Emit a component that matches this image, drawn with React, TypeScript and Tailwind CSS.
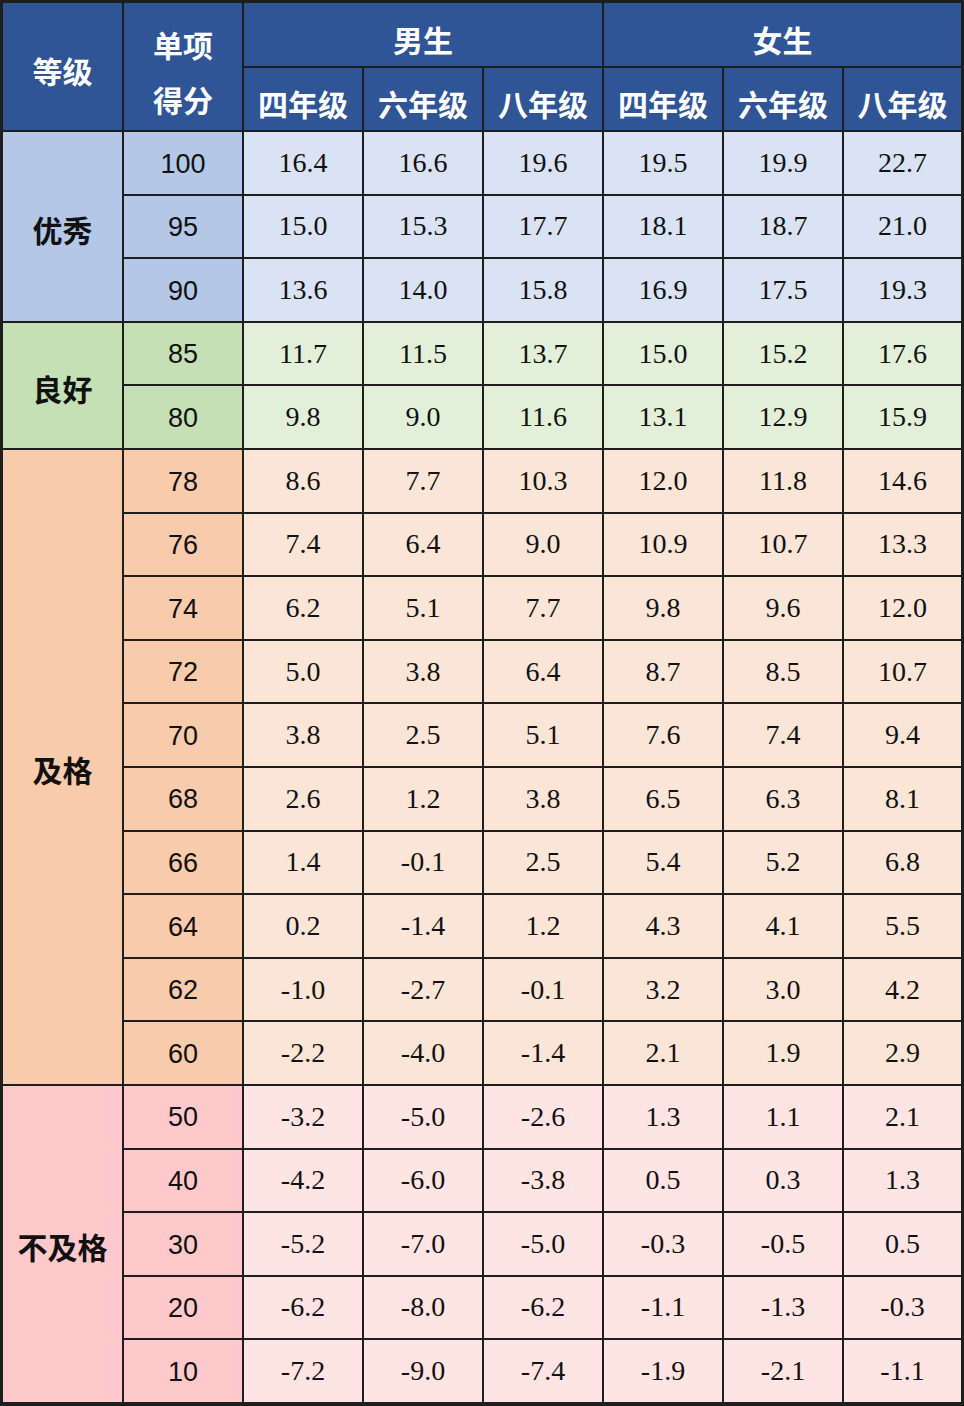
const grades = ["四年级", "六年级", "八年级", "四年级", "六年级", "八年级"];

const groups = [
  {
    label: "优秀",
    span: "row-span-3",
    side: "bg-[#b4c7e7]",
    cell: "bg-[#dae3f3]",
    rows: [
      ["100", "16.4", "16.6", "19.6", "19.5", "19.9", "22.7"],
      ["95", "15.0", "15.3", "17.7", "18.1", "18.7", "21.0"],
      ["90", "13.6", "14.0", "15.8", "16.9", "17.5", "19.3"],
    ],
  },
  {
    label: "良好",
    span: "row-span-2",
    side: "bg-[#c5e0b4]",
    cell: "bg-[#e2f0d9]",
    rows: [
      ["85", "11.7", "11.5", "13.7", "15.0", "15.2", "17.6"],
      ["80", "9.8", "9.0", "11.6", "13.1", "12.9", "15.9"],
    ],
  },
  {
    label: "及格",
    span: "row-span-10",
    side: "bg-[#f8cbad]",
    cell: "bg-[#fbe5d6]",
    rows: [
      ["78", "8.6", "7.7", "10.3", "12.0", "11.8", "14.6"],
      ["76", "7.4", "6.4", "9.0", "10.9", "10.7", "13.3"],
      ["74", "6.2", "5.1", "7.7", "9.8", "9.6", "12.0"],
      ["72", "5.0", "3.8", "6.4", "8.7", "8.5", "10.7"],
      ["70", "3.8", "2.5", "5.1", "7.6", "7.4", "9.4"],
      ["68", "2.6", "1.2", "3.8", "6.5", "6.3", "8.1"],
      ["66", "1.4", "-0.1", "2.5", "5.4", "5.2", "6.8"],
      ["64", "0.2", "-1.4", "1.2", "4.3", "4.1", "5.5"],
      ["62", "-1.0", "-2.7", "-0.1", "3.2", "3.0", "4.2"],
      ["60", "-2.2", "-4.0", "-1.4", "2.1", "1.9", "2.9"],
    ],
  },
  {
    label: "不及格",
    span: "row-span-5",
    side: "bg-[#ffc9cc]",
    cell: "bg-[#ffe4e4]",
    rows: [
      ["50", "-3.2", "-5.0", "-2.6", "1.3", "1.1", "2.1"],
      ["40", "-4.2", "-6.0", "-3.8", "0.5", "0.3", "1.3"],
      ["30", "-5.2", "-7.0", "-5.0", "-0.3", "-0.5", "0.5"],
      ["20", "-6.2", "-8.0", "-6.2", "-1.1", "-1.3", "-0.3"],
      ["10", "-7.2", "-9.0", "-7.4", "-1.9", "-2.1", "-1.1"],
    ],
  },
];

const cjk = "font-['Noto_Sans_CJK_SC',sans-serif] font-bold";

export default function App() {
  return (
    <div className="w-[964px] h-[1406px] bg-white">
      <div className="grid grid-cols-[119px_repeat(6,118px)_117px] grid-rows-[63px_62px_repeat(20,61.6px)] gap-[2px] bg-[#1e1e1e] pt-[3px] px-[3px] pb-[4px]">
        <div className={`row-span-2 flex items-center justify-center bg-[#2f5597] pt-[8px] text-[30px] text-white ${cjk}`}>
          等级
        </div>
        <div className={`row-span-2 flex flex-col items-center justify-center bg-[#2f5597] pt-[10px] text-[30px] leading-[55px] text-white ${cjk}`}>
          <span>单项</span>
          <span>得分</span>
        </div>
        <div className={`col-span-3 flex items-center justify-center bg-[#2f5597] pt-[10px] text-[30px] text-white ${cjk}`}>
          男生
        </div>
        <div className={`col-span-3 flex items-center justify-center bg-[#2f5597] pt-[10px] text-[30px] text-white ${cjk}`}>
          女生
        </div>
        {grades.map((g, i) => (
          <div
            key={i}
            className={`flex items-center justify-center bg-[#2f5597] pt-[8px] text-[30px] text-white ${cjk}`}
          >
            {g}
          </div>
        ))}

        {groups.map((group) => [
          <div
            key={group.label}
            className={`${group.span} ${group.side} flex items-center justify-center pt-[6px] text-[30px] text-[#111] ${cjk}`}
          >
            {group.label}
          </div>,
          ...group.rows.flatMap((row) =>
            row.map((v, j) =>
              j === 0 ? (
                <div
                  key={group.label + row[0] + j}
                  className={`${group.side} flex items-center justify-center pt-[2px] font-['Liberation_Sans',sans-serif] text-[27px] text-[#111]`}
                >
                  {v}
                </div>
              ) : (
                <div
                  key={group.label + row[0] + j}
                  className={`${group.cell} flex items-center justify-center font-['Liberation_Serif',serif] text-[28px] text-[#111]`}
                >
                  {v}
                </div>
              )
            )
          ),
        ])}
      </div>
    </div>
  );
}
